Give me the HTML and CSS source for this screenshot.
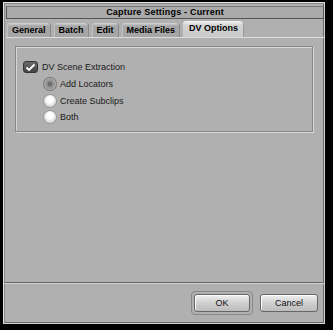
FILE: index.html
```html
<!DOCTYPE html>
<html lang="en">
<head>
    <meta charset="UTF-8">
    <title>Capture Settings - Current</title>
    <link rel="stylesheet" href="styles.css">
</head>
<body>
    <div class="window">
        <div class="titlebar">Capture Settings - Current</div>
        <nav class="tabs">
            <span class="tab">General</span>
            <span class="tab">Batch</span>
            <span class="tab">Edit</span>
            <span class="tab">Media Files</span>
            <span class="tab active">DV Options</span>
        </nav>
        <main class="panel">
            <section class="group">
                <label class="option">
                    <span class="checkbox">
                        <svg width="11" height="9" viewBox="0 0 11 9"><path d="M1.5 4.5 L4 7 L9.5 1.5" fill="none" stroke="#fff" stroke-width="1.8"/></svg>
                    </span>
                    DV Scene Extraction
                </label>
                <div class="radios">
                    <label class="option"><span class="radio checked"></span>Add Locators</label>
                    <label class="option"><span class="radio"></span>Create Subclips</label>
                    <label class="option"><span class="radio"></span>Both</label>
                </div>
            </section>
        </main>
        <footer class="footer">
            <span class="default-ring"><button class="btn">OK</button></span>
            <button class="btn">Cancel</button>
        </footer>
    </div>
</body>
</html>
```

FILE: styles.css
```css
html, body { margin: 0; background: #000; }
body { width: 333px; height: 330px; padding-top: 2px; box-sizing: border-box; font-family: "Liberation Sans", Arial, sans-serif; }
.window { margin-left: 3px; width: 322px; height: 322px; box-sizing: border-box; background: #b0b0b0; border: 1px solid #e2e2e2; border-right-color: #d0d0d0; border-bottom-color: #d0d0d0; box-shadow: inset 1px 1px 0 #8a8a8a, inset -1px -1px 0 #6a6a6a; padding: 3px 0 0 2px; display: flex; flex-direction: column; }
.titlebar { height: 11px; line-height: 11px; background: #aaaaaa; border: 1px solid #555; border-top-color: #777; text-align: center; font-weight: bold; font-size: 9px; color: #000; letter-spacing: 0.2px; }
.tabs { display: flex; gap: 3px; padding: 2px 0 0 1px; align-items: flex-end; height: 16px; }
.tab { height: 14px; line-height: 14px; padding: 0 5px; background: linear-gradient(#d8d8d8, #a6a6a6 3px); border-radius: 3px 3px 0 0; font-weight: bold; font-size: 9px; color: #000; box-shadow: inset 1px 0 0 #c0c0c0, inset -1px 0 0 #888; }
.tab.active { height: 16px; line-height: 15px; padding: 0 6px; background: linear-gradient(#f4f4f4, #d4d4d4 4px, #c8c8c8); box-shadow: inset -1px 0 0 #999; }
.panel { flex: 1; border-top: 1px solid #dcdcdc; padding: 8px 11px 0 9px; }
.group { height: 86px; border: 1px solid #888; box-shadow: 1px 1px 0 #d6d6d6, inset 1px 1px 0 #d6d6d6; padding: 12px 0 0 7px; box-sizing: border-box; font-size: 9px; color: #1a1a1a; }
.option { display: flex; align-items: center; gap: 4px; height: 16px; }
.checkbox { width: 15px; height: 12px; border-radius: 3px; background: linear-gradient(#6a6a6a, #444); border: 1px solid #333; box-sizing: border-box; display: flex; align-items: center; justify-content: center; }
.radios { padding-left: 21px; margin-top: 1px; }
.radios .option { height: 16.5px; }
.radio { width: 12px; height: 12px; border-radius: 50%; background: radial-gradient(circle at 50% 40%, #ffffff 30%, #e0e0e0 60%, #b8b8b8); box-shadow: 0 0 0 1px #999; }
.radio.checked { background: radial-gradient(circle, #6e6e6e 25%, #8a8a8a 30%, #a8a8a8 70%, #8a8a8a); box-shadow: 0 0 0 1px #777; }
.footer { height: 40px; border-top: 1px solid #666; box-shadow: inset 0 1px 0 #d0d0d0; display: flex; justify-content: flex-end; align-items: center; gap: 7px; padding-right: 6px; margin-left: -2px; }
.default-ring { padding: 2px; border-radius: 4px; border: 1px solid #888; display: flex; }
.btn { width: 56px; height: 18px; padding: 0; border: 1px solid #666; border-radius: 3px; background: linear-gradient(#f0f0f0, #cfcfcf 50%, #bdbdbd); font-family: "Liberation Sans", Arial, sans-serif; font-size: 9px; color: #111; box-shadow: inset 1px 1px 0 #fff; }
.footer > .btn { width: 58px; }
```
